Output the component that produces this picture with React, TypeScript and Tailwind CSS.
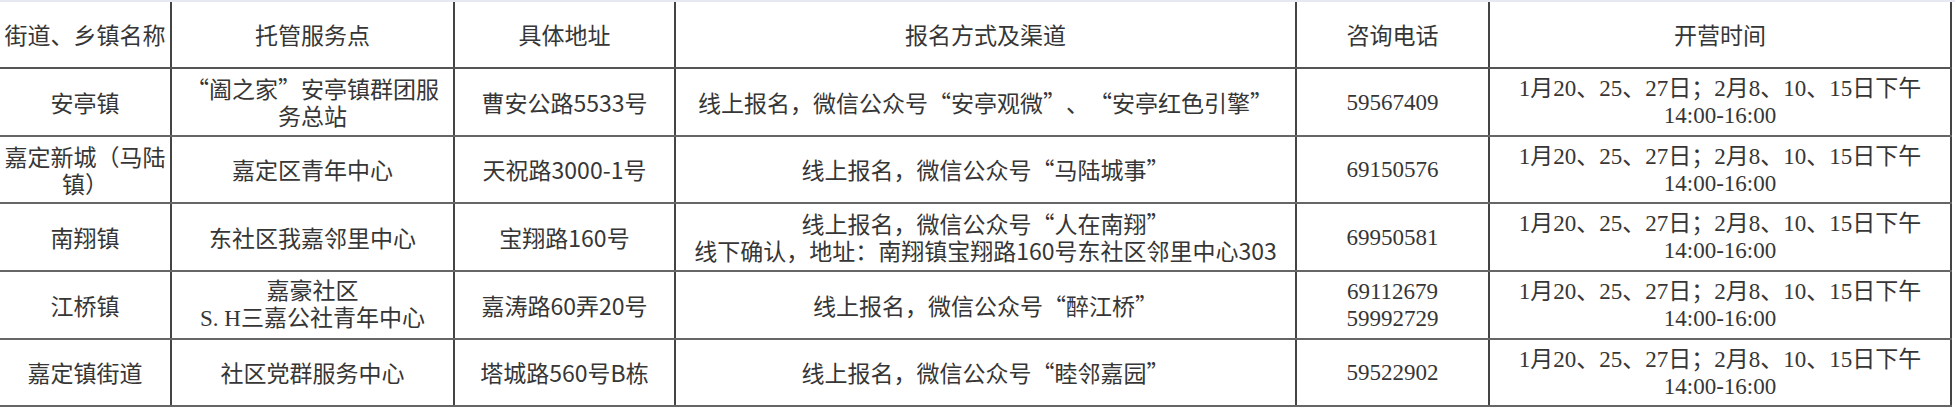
import React from "react";

type Cell = { lines: string[]; serif?: boolean };

const header = ["街道、乡镇名称", "托管服务点", "具体地址", "报名方式及渠道", "咨询电话", "开营时间"];

const time: Cell = { lines: ["1月20、25、27日；2月8、10、15日下午", "14:00-16:00"], serif: true };

const rows: { h: string; cells: Cell[] }[] = [
  {
    h: "h-[68px]",
    cells: [
      { lines: ["安亭镇"] },
      { lines: ["“阖之家”安亭镇群团服", "务总站"] },
      { lines: ["曹安公路5533号"] },
      { lines: ["线上报名，微信公众号“安亭观微”、“安亭红色引擎”"] },
      { lines: ["59567409"], serif: true },
      time,
    ],
  },
  {
    h: "h-[67px]",
    cells: [
      { lines: ["嘉定新城（马陆", "镇）"] },
      { lines: ["嘉定区青年中心"] },
      { lines: ["天祝路3000-1号"] },
      { lines: ["线上报名，微信公众号“马陆城事”"] },
      { lines: ["69150576"], serif: true },
      time,
    ],
  },
  {
    h: "h-[68px]",
    cells: [
      { lines: ["南翔镇"] },
      { lines: ["东社区我嘉邻里中心"] },
      { lines: ["宝翔路160号"] },
      { lines: ["线上报名，微信公众号“人在南翔”", "线下确认，地址：南翔镇宝翔路160号东社区邻里中心303"] },
      { lines: ["69950581"], serif: true },
      time,
    ],
  },
  {
    h: "h-[68px]",
    cells: [
      { lines: ["江桥镇"] },
      { lines: ["嘉豪社区", "S. H三嘉公社青年中心"], serif: true },
      { lines: ["嘉涛路60弄20号"] },
      { lines: ["线上报名，微信公众号“醉江桥”"] },
      { lines: ["69112679", "59992729"], serif: true },
      time,
    ],
  },
  {
    h: "h-[67px]",
    cells: [
      { lines: ["嘉定镇街道"] },
      { lines: ["社区党群服务中心"] },
      { lines: ["塔城路560号B栋"] },
      { lines: ["线上报名，微信公众号“睦邻嘉园”"] },
      { lines: ["59522902"], serif: true },
      time,
    ],
  },
];

const widths = ["w-[172px]", "w-[283px]", "w-[221px]", "w-[621px]", "w-[193px]", "w-[462px]"];

function Text({ s }: { s: string }) {
  const parts: React.ReactNode[] = [];
  let buf = "";
  let k = 0;
  for (const ch of s) {
    if (ch === "“" || ch === "”") {
      if (buf) parts.push(<React.Fragment key={k++}>{buf}</React.Fragment>);
      buf = "";
      parts.push(
        <span
          key={k++}
          className={`inline-block w-[1em] font-['Noto_Sans_CJK_SC',sans-serif] ${ch === "“" ? "text-right" : "text-left"}`}
        >
          {ch}
        </span>
      );
    } else {
      buf += ch;
    }
  }
  if (buf) parts.push(<React.Fragment key={k++}>{buf}</React.Fragment>);
  return <>{parts}</>;
}

export default function App() {
  return (
    <div className="w-[1955px] h-[409px] bg-white overflow-hidden text-[#363636] text-[23px] leading-[27px] font-['Noto_Sans_CJK_SC',sans-serif]">
      <div className="h-[2px] w-full bg-[#e6e9f1]" />
      <div className="flex w-[1952px] h-[67px] border-b-2 border-[#555]">
        {header.map((t, i) => (
          <div
            key={i}
            className={`${widths[i]} shrink-0 flex items-center justify-center text-center border-r-2 border-[#444] px-[2px] whitespace-nowrap`}
          >
            {t}
          </div>
        ))}
      </div>
      {rows.map((r, ri) => (
        <div key={ri} className={`flex w-[1952px] ${r.h} border-b-2 border-[#666]`}>
          {r.cells.map((c, ci) => (
            <div
              key={ci}
              className={`${widths[ci]} shrink-0 flex flex-col items-center justify-center text-center border-r-2 border-[#444] whitespace-nowrap ${
                c.serif ? "font-['Liberation_Serif','Noto_Sans_CJK_SC',serif]" : ""
              }`}
            >
              {c.lines.map((l, li) => (
                <span key={li} className="block">
                  <Text s={l} />
                </span>
              ))}
            </div>
          ))}
        </div>
      ))}
    </div>
  );
}
